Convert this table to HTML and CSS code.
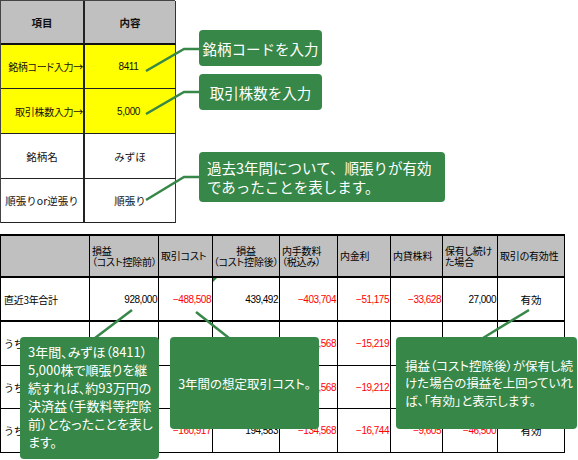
FILE: index.html
```html
<!DOCTYPE html>
<html lang="ja">
<head>
<meta charset="utf-8">
<title>損益シミュレーション</title>
<link rel="stylesheet" href="styles.css">
</head>
<body>
<div class="page">
  <div class="top">
    <div class="spec">
      <div class="sc sh">項目</div>
      <div class="sc sh">内容</div>
      <div class="sc sy slab">銘柄コード入力→</div>
      <div class="sc sy snum">8411</div>
      <div class="sc sy slab">取引株数入力→</div>
      <div class="sc sy snum">5,000</div>
      <div class="sc">銘柄名</div>
      <div class="sc">みずほ</div>
      <div class="sc">順張りor逆張り</div>
      <div class="sc">順張り</div>
    </div>
    <div class="notes">
      <div class="note n1">銘柄コードを入力</div>
      <div class="note n2">取引株数を入力</div>
      <div class="note n3">過去3年間について、順張りが有効<br>であったことを表します。</div>
    </div>
  </div>

  <div class="pl">
    <div class="c hd"></div>
    <div class="c hd">損益<br>（コスト控除前）</div>
    <div class="c hd">取引コスト</div>
    <div class="c hd ctr">損益<br>（コスト控除後）</div>
    <div class="c hd">内手数料<br>（税込み）</div>
    <div class="c hd">内金利</div>
    <div class="c hd">内貸株料</div>
    <div class="c hd">保有し続け<br>た場合</div>
    <div class="c hd">取引の有効性</div>

    <div class="c r1 lab">直近3年合計</div>
    <div class="c r1 num">928,000</div>
    <div class="c r1 num neg">−488,508</div>
    <div class="c r1 num flag">439,492</div>
    <div class="c r1 num neg">−403,704</div>
    <div class="c r1 num neg">−51,175</div>
    <div class="c r1 num neg">−33,628</div>
    <div class="c r1 num">27,000</div>
    <div class="c r1 ok">有効</div>

    <div class="c lab">うち1年目</div>
    <div class="c num"></div>
    <div class="c num neg"></div>
    <div class="c num"></div>
    <div class="c num neg">−134,568</div>
    <div class="c num neg">−15,219</div>
    <div class="c num neg"></div>
    <div class="c num"></div>
    <div class="c ok"></div>

    <div class="c lab">うち2年目</div>
    <div class="c num"></div>
    <div class="c num neg"></div>
    <div class="c num"></div>
    <div class="c num neg">−134,568</div>
    <div class="c num neg">−19,212</div>
    <div class="c num neg"></div>
    <div class="c num"></div>
    <div class="c ok"></div>

    <div class="c lab">うち3年目</div>
    <div class="c num"></div>
    <div class="c num neg">−160,917</div>
    <div class="c num">194,583</div>
    <div class="c num neg">−134,568</div>
    <div class="c num neg">−16,744</div>
    <div class="c num neg">−9,605</div>
    <div class="c num neg">−46,500</div>
    <div class="c ok">有効</div>
  </div>

  <svg class="wires" width="578" height="460" viewBox="0 0 578 460">
    <polyline points="199,49 184,49 146,71"/>
    <polyline points="199,92 184,92 146,114"/>
    <polyline points="199,177 184,177 146,200"/>
    <line x1="132" y1="310" x2="95" y2="338"/>
    <line x1="196" y1="312" x2="229" y2="338"/>
    <line x1="529" y1="310" x2="483" y2="338"/>
  </svg>

  <div class="callout ca">3年間、みずほ（8411）<br>5,000株で順張りを継<br>続すれば、約93万円の<br>決済益（手数料等控除<br>前）となったことを表し<br>ます。</div>
  <div class="callout cb">3年間の想定取引コスト。</div>
  <div class="callout cc"><span>損益（コスト控除後）が保有し続<br>けた場合の損益を上回っていれ<br>ば、「有効」と表示します。</span></div>
</div>
</body>
</html>
```

FILE: styles.css
```css
* { box-sizing: border-box; }

html, body {
  margin: 0;
  padding: 0;
  background: #fff;
}

body {
  width: 578px;
  height: 460px;
  overflow: hidden;
  font-family: "Noto Sans CJK JP", "Noto Sans", sans-serif;
  color: #000;
}

.page {
  position: relative;
  width: 578px;
  height: 460px;
}

/* ---------- top block ---------- */
.top {
  display: flex;
  align-items: flex-start;
}

.spec {
  display: grid;
  grid-template-columns: 84px 91px;
  grid-template-rows: 44px 44px 45px 45px 44px;
  width: 175px;
  border-top: 1px solid #444;
  border-left: 1px solid #444;
  font-size: 10.5px;
}

.sc {
  display: flex;
  align-items: center;
  justify-content: center;
  white-space: nowrap;
  border-bottom: 1px solid #222;
  border-right: 1px solid #333;
  color: #111;
}

.sc:nth-child(odd) {
  border-right: 2px solid #222;
}

.sh {
  background: #c0c0c0;
  border-bottom: 2px solid #111;
  font-weight: bold;
}

.sy {
  background: #ffff00;
}

.slab {
  justify-content: flex-end;
  font-size: 10px;
  font-feature-settings: "palt";
  letter-spacing: -0.3px;
}

.snum {
  font-family: "Liberation Sans", sans-serif;
  font-size: 10px;
  letter-spacing: -0.4px;
  padding-right: 3px;
}

.notes {
  display: flex;
  flex-direction: column;
  margin-left: 24px;
}

.note {
  background: #368748;
  color: #fff;
  border-radius: 4px;
  font-size: 14.5px;
  white-space: nowrap;
  display: flex;
  align-items: center;
  justify-content: center;
}

.n1 {
  width: 123px;
  height: 36px;
  margin-top: 30px;
}

.n2 {
  width: 123px;
  height: 36px;
  margin-top: 8px;
}

.n3 {
  width: 246px;
  height: 50px;
  margin-top: 42px;
  line-height: 19px;
  justify-content: flex-start;
  padding-left: 8px;
}

/* ---------- P/L table ---------- */
.pl {
  display: grid;
  grid-template-columns: 89px 69px 54px 67px 58px 53px 52px 55px 67px;
  grid-template-rows: 42px 44px 44px 43px 44px;
  width: 565px;
  margin-top: 11px;
  border-top: 2px solid #000;
  border-left: 1px solid #000;
  font-size: 10.5px;
}

.c {
  display: flex;
  align-items: center;
  white-space: nowrap;
  border-right: 1px solid #000;
  border-bottom: 1px solid #000;
  overflow: hidden;
}

.hd {
  background: #c0c0c0;
  border-bottom: 2px solid #000;
  padding-left: 2px;
  line-height: 11.5px;
  font-size: 10px;
  letter-spacing: -0.2px;
  font-feature-settings: "palt";
}

.hd.ctr {
  justify-content: center;
  text-align: center;
  padding-left: 0;
}

.r1 {
  border-bottom: 2px solid #000;
}

.lab {
  padding-left: 3px;
  font-size: 10px;
  letter-spacing: -0.3px;
}

.num {
  justify-content: flex-end;
  padding-right: 1px;
  font-family: "Liberation Sans", sans-serif;
  font-size: 10px;
  letter-spacing: -0.5px;
}

.neg {
  color: #ff0000;
}

.ok {
  justify-content: center;
  font-size: 10.5px;
}

.flag {
  position: relative;
}

.flag::before {
  content: "";
  position: absolute;
  left: 0;
  top: 0;
  border-top: 4px solid #1e8a2a;
  border-right: 4px solid transparent;
}

/* ---------- connectors & callouts ---------- */
.wires {
  position: absolute;
  left: 0;
  top: 0;
  pointer-events: none;
}

.wires polyline,
.wires line {
  fill: none;
  stroke: #368748;
  stroke-width: 2.5;
}

.callout {
  position: absolute;
  background: #368748;
  color: #fff;
  border-radius: 4px;
  white-space: nowrap;
  font-feature-settings: "palt";
}

.ca {
  left: 20px;
  top: 337px;
  width: 139px;
  height: 122px;
  padding: 6px 0 0 8px;
  font-size: 13px;
  line-height: 18px;
}

.cb {
  left: 170px;
  top: 337px;
  width: 149px;
  height: 92px;
  display: flex;
  align-items: center;
  justify-content: center;
  font-size: 12.5px;
}

.cc {
  left: 396px;
  top: 337px;
  width: 181px;
  height: 92px;
  display: flex;
  align-items: center;
  padding-left: 9px;
  font-size: 12.5px;
  line-height: 17.5px;
}
```
